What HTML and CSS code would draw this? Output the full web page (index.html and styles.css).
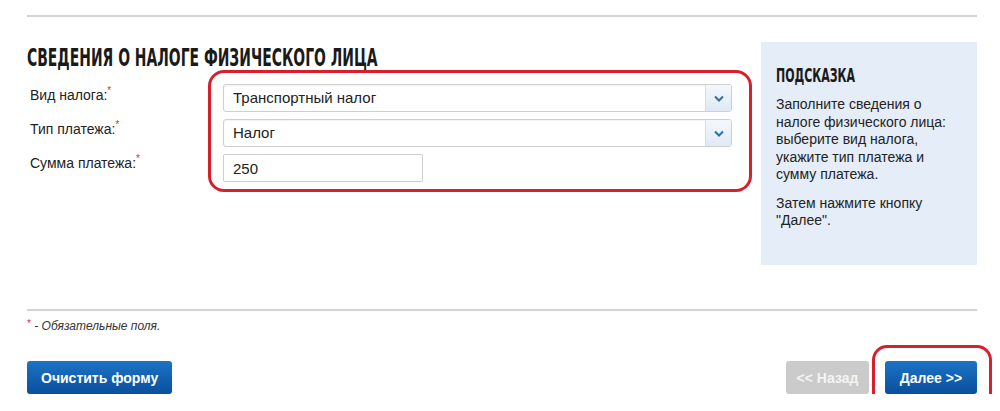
FILE: index.html
```html
<!DOCTYPE html>
<html lang="ru">
<head>
    <meta charset="UTF-8">
    <meta name="viewport" content="width=device-width, initial-scale=1.0">
    <title>Сведения о налоге физического лица</title>
    <link rel="stylesheet" href="styles.css">
</head>
<body>
    <div class="page">
        <hr class="rule rule-top">

        <div class="main">
            <div class="form-col">
                <h2 class="title"><span>Сведения о налоге физического лица</span></h2>

                <div class="form-body">
                    <div class="labels">
                        <label>Вид налога:<sup>*</sup></label>
                        <label>Тип платежа:<sup>*</sup></label>
                        <label>Сумма платежа:<sup>*</sup></label>
                    </div>

                    <div class="fields">
                        <div class="select">
                            <span class="select-value">Транспортный налог</span>
                            <span class="select-arrow">
                                <svg width="10" height="7" viewBox="0 0 10 7"><path d="M1 1.5 L5 5.5 L9 1.5" fill="none" stroke="#2f6fa8" stroke-width="2"/></svg>
                            </span>
                        </div>
                        <div class="select">
                            <span class="select-value">Налог</span>
                            <span class="select-arrow">
                                <svg width="10" height="7" viewBox="0 0 10 7"><path d="M1 1.5 L5 5.5 L9 1.5" fill="none" stroke="#2f6fa8" stroke-width="2"/></svg>
                            </span>
                        </div>
                        <input class="text-input" type="text" value="250">
                    </div>
                </div>
            </div>

            <div class="hint">
                <h3 class="hint-title"><span>Подсказка</span></h3>
                <p>Заполните сведения о налоге физического лица: выберите вид налога, укажите тип платежа и сумму платежа.</p>
                <p>Затем нажмите кнопку "Далее".</p>
            </div>
        </div>

        <hr class="rule rule-bottom">

        <p class="note"><sup>*</sup> - Обязательные поля.</p>

        <div class="actions">
            <button class="btn btn-clear">Очистить форму</button>
            <div class="nav">
                <button class="btn btn-disabled">&lt;&lt; Назад</button>
                <span class="marked">
                    <button class="btn btn-next">Далее &gt;&gt;</button>
                </span>
            </div>
        </div>
    </div>
</body>
</html>
```

FILE: styles.css
```css
body {
    margin: 0;
    background-color: #fff;
    font-family: "Liberation Sans", Arial, sans-serif;
    color: #222;
}
.page {
    padding: 0 23px 0 27px;
}
.rule {
    border: none;
    height: 2px;
    background-color: #d4d4d4;
    margin: 0;
}
.rule-top {
    margin-top: 15px;
}
.main {
    display: flex;
    margin-top: 25px;
}
.form-col {
    flex: 1;
}
.title,
.hint-title {
    margin: 0;
    font-family: "DejaVu Sans Condensed", "DejaVu Sans", sans-serif;
    font-weight: bold;
    text-transform: uppercase;
    color: #1a1a1a;
    white-space: nowrap;
}
.title {
    font-size: 24px;
    line-height: 28px;
    padding-top: 2px;
    height: 26px;
}
.title span {
    display: inline-block;
    transform: scaleX(0.645);
    transform-origin: left center;
}
.hint-title span {
    display: inline-block;
    transform: scaleX(0.61);
    transform-origin: left center;
}
.form-body {
    display: flex;
}
.labels {
    width: 178px;
    padding-left: 3px;
    padding-top: 16px;
    display: flex;
    flex-direction: column;
    gap: 16px;
}
.labels label {
    font-size: 14px;
    line-height: 18px;
    color: #222;
}
sup {
    color: #e03030;
    font-size: 10px;
    vertical-align: top;
    line-height: 10px;
}
.fields {
    width: 509px;
    border: 3px solid #d8202c;
    border-radius: 16px;
    padding: 11px 17px 7px 12px;
    display: flex;
    flex-direction: column;
    gap: 7px;
}
.select {
    display: flex;
    height: 28px;
    border: 1px solid #cfcfcf;
    border-radius: 3px;
    box-sizing: border-box;
    box-shadow: inset 0 1px 2px rgba(0, 0, 0, 0.06);
    overflow: hidden;
}
.select-value {
    flex: 1;
    padding-left: 9px;
    font-size: 15px;
    line-height: 26px;
    color: #222;
}
.select-arrow {
    width: 25px;
    border-left: 1px solid #dcdcdc;
    background: linear-gradient(#f4f8fc, #dfe9f4);
    display: flex;
    align-items: center;
    justify-content: center;
}
.text-input {
    width: 200px;
    height: 28px;
    box-sizing: border-box;
    border: 1px solid #cfcfcf;
    border-radius: 2px;
    padding: 0 9px;
    font-family: "Liberation Sans", Arial, sans-serif;
    font-size: 15px;
    color: #222;
}
.hint {
    width: 216px;
    height: 223px;
    box-sizing: border-box;
    background-color: #e5edf8;
    padding: 21px 10px 0 15px;
}
.hint-title {
    font-size: 20px;
    line-height: 24px;
    margin-bottom: 9px;
}
.hint p {
    margin: 0 0 11px;
    font-size: 14px;
    line-height: 17.5px;
    color: #222;
}
.rule-bottom {
    margin-top: 44px;
}
.note {
    margin: 8px 0 0;
    font-size: 12px;
    line-height: 14px;
    font-style: italic;
    color: #333;
}
.note sup {
    font-style: normal;
}
.actions {
    display: flex;
    justify-content: space-between;
    margin-top: 28px;
}
.nav {
    display: flex;
    gap: 16px;
}
.btn {
    height: 33px;
    padding: 0 14px;
    border: none;
    border-radius: 3px;
    background: linear-gradient(#1b73c6, #0a4f9c);
    color: #fff;
    font-family: "Liberation Sans", Arial, sans-serif;
    font-size: 14px;
    font-weight: bold;
    cursor: pointer;
}
.btn-disabled {
    width: 83px;
    padding: 0;
    background: #cbcbcb;
    color: #f4f4f4;
    cursor: default;
}
.btn-next {
    width: 92px;
    padding: 0;
}
.marked {
    position: relative;
    display: flex;
}
.marked::after {
    content: "";
    position: absolute;
    top: -16px;
    left: -13px;
    right: -15px;
    bottom: -14px;
    border: 3px solid #d8202c;
    border-radius: 15px;
    pointer-events: none;
}
```
